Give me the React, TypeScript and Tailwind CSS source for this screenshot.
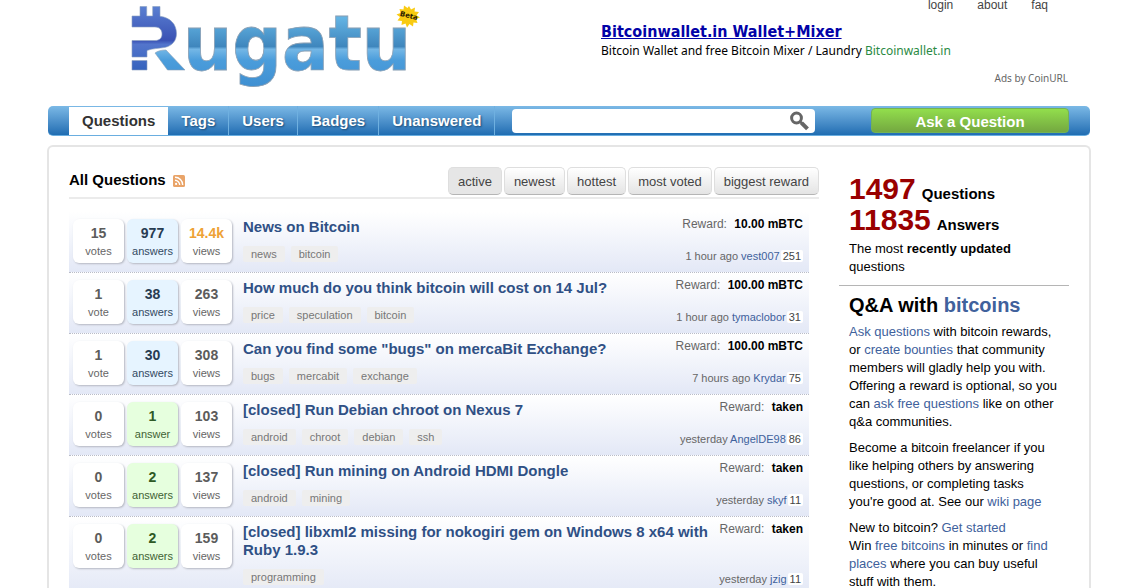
import React from "react";

type Question = {
  votes: number;
  answers: number;
  views: string;
  tone: "blue" | "green";
  hot?: boolean;
  title: string;
  tags: string[];
  reward: string;
  when: string;
  user: string;
  score: number;
};

const questions: Question[] = [
  { votes: 15, answers: 977, views: "14.4k", tone: "blue", hot: true, title: "News on Bitcoin", tags: ["news", "bitcoin"], reward: "10.00 mBTC", when: "1 hour ago", user: "vest007", score: 251 },
  { votes: 1, answers: 38, views: "263", tone: "blue", title: "How much do you think bitcoin will cost on 14 Jul?", tags: ["price", "speculation", "bitcoin"], reward: "100.00 mBTC", when: "1 hour ago", user: "tymaclobor", score: 31 },
  { votes: 1, answers: 30, views: "308", tone: "blue", title: 'Can you find some "bugs" on mercaBit Exchange?', tags: ["bugs", "mercabit", "exchange"], reward: "100.00 mBTC", when: "7 hours ago", user: "Krydar", score: 75 },
  { votes: 0, answers: 1, views: "103", tone: "green", title: "[closed] Run Debian chroot on Nexus 7", tags: ["android", "chroot", "debian", "ssh"], reward: "taken", when: "yesterday", user: "AngelDE98", score: 86 },
  { votes: 0, answers: 2, views: "137", tone: "green", title: "[closed] Run mining on Android HDMI Dongle", tags: ["android", "mining"], reward: "taken", when: "yesterday", user: "skyf", score: 11 },
  { votes: 0, answers: 2, views: "159", tone: "green", title: "[closed] libxml2 missing for nokogiri gem on Windows 8 x64 with Ruby 1.9.3", tags: ["programming"], reward: "taken", when: "yesterday", user: "jzig", score: 11 },
];

function Logo() {
  return (
    <svg width="300" height="94" viewBox="0 0 300 94" role="img" aria-label="Rugatu">
      <defs>
        <linearGradient id="blue" gradientUnits="userSpaceOnUse" x1="0" y1="18" x2="0" y2="86">
          <stop offset="0" stopColor="#63b3e3" />
          <stop offset="0.42" stopColor="#3f86bd" />
          <stop offset="0.46" stopColor="#74b7e6" />
          <stop offset="0.62" stopColor="#4b9ddb" />
          <stop offset="1" stopColor="#3f90d2" />
        </linearGradient>
        <linearGradient id="indigo" gradientUnits="userSpaceOnUse" x1="0" y1="6" x2="0" y2="70">
          <stop offset="0" stopColor="#5a80d2" />
          <stop offset="0.54" stopColor="#3a52b4" />
          <stop offset="0.6" stopColor="#5375cc" />
          <stop offset="1" stopColor="#3563bd" />
        </linearGradient>
      </defs>
      <g fill="url(#indigo)" stroke="#8aa0c0" strokeWidth="0.6">
        <path d="M12 16h8V6.500h6.700V16h6V6.500H40V16.300C50.500 17.500 56.500 24.500 56.500 33.500c0 7-4 12-11 13.800C39 48.500 32 48.500 27 50.500V57H12V40.500h23c4.500 0 7-2.300 7-6.500s-2.500-7-7-7H12z" />
        <path d="M12 60.500h15V70H12z" />
      </g>
      <path d="M35 53c3-2.200 6.500-3 11-3L65 70H47.500z" fill="url(#blue)" stroke="#8aa0b5" strokeWidth="0.6" />
      <text x="63" y="70" fontSize="77" fontWeight="700" fontFamily="'DejaVu Sans Condensed'" fill="url(#blue)" stroke="#8aa0b5" strokeWidth="0.8">ugatu</text>
      <path fill="#f9cb12" d="M289 6l2 3.500 4-2-.5 4 4.500.5-2.500 3.300 3.500 2.200-4 1.500 1.500 4-4-.5-.5 4-3.500-2.500-2.500 3.500-1.500-4-4 1.500.5-4-4.500-.5 2.500-3.500-3.500-2.500 4-1.500-1-4 4 .5.500-4 3.500 2.500z" />
      <text x="280" y="18" fontSize="7" fontWeight="700" fontFamily="'DejaVu Sans'" fill="#2a2000" transform="rotate(14 289 15)">Beta</text>
    </svg>
  );
}

function Stat({ n, label, box, num }: { n: string; label: string; box: string; num: string }) {
  return (
    <div className={`flex h-11 w-[51px] flex-col items-center rounded-md pt-1 shadow-[1px_1px_2px_#b5b8c2] ${box}`}>
      <span className={`text-sm leading-5 font-bold ${num}`}>{n}</span>
      <span className="text-[11px] leading-4">{label}</span>
    </div>
  );
}

function Row({ q }: { q: Question }) {
  const answerBox = q.tone === "blue" ? "bg-[#e6f4ff] text-[#33495f]" : "bg-[#e6ffde] text-[#3f6234]";
  const answerNum = q.tone === "blue" ? "text-[#283c52]" : "text-[#2f5a25]";
  return (
    <li className="flex border-b border-dotted border-[#b9bcc8] bg-linear-to-b from-white to-[#e3e8f6] pt-1.5 pr-1.5 pb-2 pl-1">
      <div className="flex gap-[3px] pt-px pb-px">
        <Stat n={String(q.votes)} label={q.votes === 1 ? "vote" : "votes"} box="bg-white text-[#666]" num="text-[#5c5c5c]" />
        <Stat n={String(q.answers)} label={q.answers === 1 ? "answer" : "answers"} box={answerBox} num={answerNum} />
        <Stat n={q.views} label="views" box="bg-white text-[#666]" num={q.hot ? "text-[#eea236]" : "text-[#5c5c5c]"} />
      </div>
      <div className="ml-[11px] flex-1 pb-0.5">
        <h3 className="text-[15px] leading-[18px] font-bold">
          <a href="#" className="text-[#2f5085]">{q.title}</a>
        </h3>
        <div className="mt-2.5 flex gap-1.5">
          {q.tags.map((t) => (
            <a key={t} href="#" className="rounded-xs bg-[#eeeeee] px-2 text-[11px] leading-4 text-[#777]">{t}</a>
          ))}
        </div>
      </div>
      <div className="-mt-[3px] flex flex-col items-end justify-between whitespace-nowrap">
        <p className="text-xs leading-[18px] text-[#666]">
          Reward: <b className="ml-1 text-black">{q.reward}</b>
        </p>
        <p className="text-[11px] leading-4 text-[#666]">
          {q.when} <a href="#" className="text-[#40619c]">{q.user}</a>
          <span className="ml-px rounded-xs bg-white px-0.5 text-[#444]">{q.score}</span>
        </p>
      </div>
    </li>
  );
}

const A = ({ children }: { children: React.ReactNode }) => (
  <a href="#" className="text-[#40619c]">{children}</a>
);

function Count({ n, label }: { n: number; label: string }) {
  return (
    <p className="text-[30px] leading-[31px] text-[#900]">
      {n}
      <span className="ml-1.5 text-[15px] leading-none text-black">{label}</span>
    </p>
  );
}

export default function App() {
  return (
    <div className="flex h-screen flex-col overflow-hidden bg-white pr-[52px] pl-[47px] font-['Liberation_Sans',Arial,sans-serif] text-[13px] text-black">
      <header className="flex h-[106px] shrink-0 items-start justify-between">
        <a href="#" className="ml-[73px]"><Logo /></a>
        <div className="mr-[23px] flex w-[467px] flex-col font-['Noto_Sans',sans-serif]">
          <nav className="mr-5 flex justify-end gap-6 font-['Liberation_Sans',Arial,sans-serif] text-xs leading-[10px] text-[#444]">
            <a href="#">login</a>
            <a href="#">about</a>
            <a href="#">faq</a>
          </nav>
          <a href="#" className="mt-3 font-['DejaVu_Sans_Condensed','DejaVu_Sans',sans-serif] text-base leading-5 font-bold text-[#0202a8] underline">Bitcoinwallet.in Wallet+Mixer</a>
          <p className="text-xs leading-[18px]">
            Bitcoin Wallet and free Bitcoin Mixer / Laundry <span className="text-[#2b8a44]">Bitcoinwallet.in</span>
          </p>
          <a href="#" className="mt-2.5 self-end text-[10px] leading-4 text-[#666]">Ads by CoinURL</a>
        </div>
      </header>

      <nav className="mx-px flex h-[30px] shrink-0 items-stretch rounded-[5px] border-b border-[#6aaee0] bg-linear-to-b from-[#7bb9e6] to-[#1f6db2] pl-[21px] text-[15px] font-bold text-white">
        <a href="#" className="mt-px bg-white px-[13px] leading-7 text-[#333]">Questions</a>
        {["Tags", "Users", "Badges", "Unanswered"].map((t) => (
          <a key={t} href="#" className="border-r border-[#6fb0e0] px-[13px] leading-[29px] [text-shadow:1px_1px_2px_#1b4a75]">{t}</a>
        ))}
        <form className="ml-[17px] flex items-center" onSubmit={(e) => e.preventDefault()}>
          <div className="flex h-6 w-[303px] items-center rounded-sm bg-white pr-1">
            <input aria-label="Search" className="h-6 min-w-0 flex-1 bg-transparent px-2 text-[13px] font-normal text-black outline-none" />
            <button aria-label="Submit search" type="submit">
              <svg width="22" height="22" viewBox="0 0 22 22" fill="none" stroke="#666">
                <circle cx="7.500" cy="8" r="4.900" strokeWidth="3" />
                <path d="M11 11.500l2 2" strokeWidth="2.500" />
                <path d="M12.500 12.800l6 6" strokeWidth="4" />
              </svg>
            </button>
          </div>
        </form>
        <button className="mt-0.5 mr-[21px] ml-auto h-[25px] w-[198px] rounded-sm border border-[#74b354] bg-linear-to-b from-[#92de4c] to-[#74a840] pt-0.5 text-[15px] font-bold text-white">Ask a Question</button>
      </nav>

      <div className="mt-[9px] flex grow shrink-0 gap-5 rounded-t-md border-2 border-b-0 border-[#e5e5e5] px-5 pt-5">
        <main className="min-w-0 flex-1">
          <div className="flex h-8 items-start justify-between border-b-2 border-[#ebebeb]">
            <h1 className="flex items-center gap-[7px] text-[15px] leading-[26px] font-bold">
              All Questions
              <svg width="12" height="12" viewBox="0 0 12 12" className="mt-0.5">
                <rect width="12" height="12" rx="1.500" fill="#e9a469" />
                <g fill="none" stroke="#fff" strokeWidth="1.400">
                  <path d="M2 5.300A4.700 4.700 0 0 1 6.700 10" />
                  <path d="M2 2.300A7.700 7.700 0 0 1 9.700 10" />
                </g>
                <circle cx="3.100" cy="8.900" r="1.100" fill="#fff" />
              </svg>
            </h1>
            <div className="flex gap-0.5 text-[13px] text-[#444]">
              {["active", "newest", "hottest", "most voted", "biggest reward"].map((t, i) => (
                <button
                  key={t}
                  className={`h-7 rounded-[5px] border border-[#dedede] border-b-[#b5b5b5] px-[9px] pt-0.5 ${i === 0 ? "bg-[#e6e6e6]" : "bg-linear-to-b from-white to-[#e4e4e4]"}`}
                >
                  {t}
                </button>
              ))}
            </div>
          </div>
          <ul className="mt-[13px] mr-2.5">
            {questions.map((q) => <Row key={q.title} q={q} />)}
          </ul>
        </main>
        <aside className="w-[230px] pt-1.5 leading-[18px]">
          <div className="border-b border-[#b5b5b5] px-2.5 pb-[9px] font-bold">
            <Count n={1497} label="Questions" />
            <Count n={11835} label="Answers" />
            <p className="mt-[5px] font-normal">The most <b>recently updated</b> questions</p>
          </div>
          <div className="flex flex-col gap-2 px-2.5 pt-[9px]">
            <h2 className="text-xl leading-5 font-bold">Q&amp;A with <A>bitcoins</A></h2>
            <p><A>Ask questions</A> with bitcoin rewards, or <A>create bounties</A> that community members will gladly help you with. Offering a reward is optional, so you can <A>ask free questions</A> like on other q&amp;a communities.</p>
            <p>Become a bitcoin freelancer if you like helping others by answering questions, or completing tasks you're good at. See our <A>wiki page</A></p>
            <p>New to bitcoin? <A>Get started</A><br />Win <A>free bitcoins</A> in minutes or <A>find places</A> where you can buy useful stuff with them.</p>
          </div>
        </aside>
      </div>
    </div>
  );
}
